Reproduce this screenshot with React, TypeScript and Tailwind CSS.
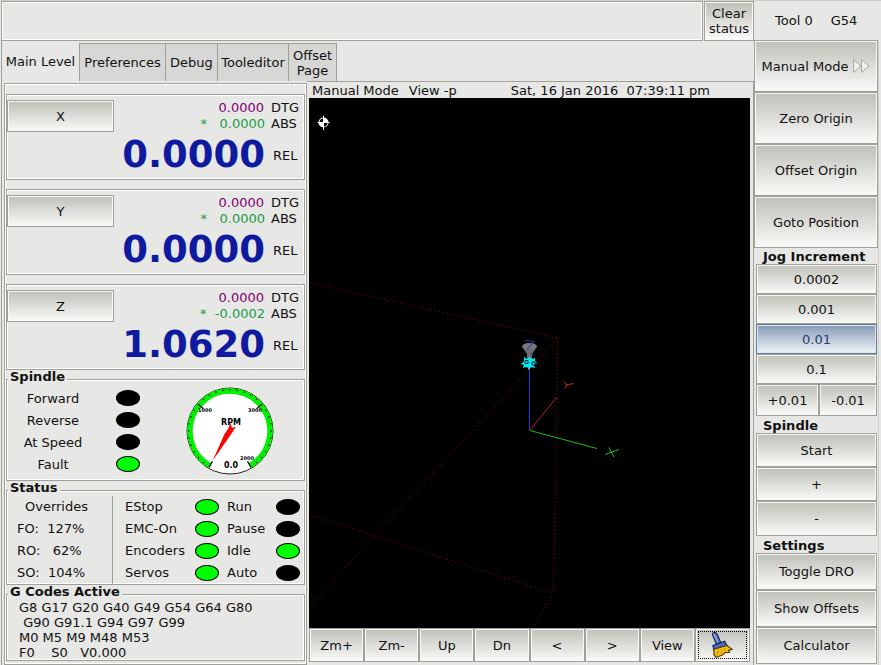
import React, { useState } from 'react';

const buttonBase =
  'flex items-center justify-center border border-[#a0a099] bg-linear-to-b from-[#bfc0b9] to-[#fafaf9] shadow-[inset_0_0_0_1px_#f8f8f6]';

type PanelButtonProps = {
  children: React.ReactNode;
  className?: string;
  label?: string;
};

const PanelButton = ({ children, className = '', label }: PanelButtonProps) => (
  <button type="button" aria-label={label} className={`${buttonBase} ${className}`}>
    {children}
  </button>
);

const Frame = ({ title, className = '', children }: { title?: string; className?: string; children: React.ReactNode }) => (
  <section className={`border border-[#a0a099] shadow-[inset_0_0_0_1px_#fff] ${className}`}>
    {title && <h2 className="-mt-2.5 mb-[3px] ml-px w-fit bg-[#e7e7e5] px-0.5 leading-[14px] font-bold">{title}</h2>}
    {children}
  </section>
);

const Led = ({ on = false }: { on?: boolean }) => (
  <span className={`block h-4 w-6 rounded-[50%] border border-black ${on ? 'bg-[#00ff00]' : 'bg-black'}`}></span>
);

const axes = [
  { name: 'X', dtg: '0.0000', abs: '*   0.0000', rel: '0.0000' },
  { name: 'Y', dtg: '0.0000', abs: '*   0.0000', rel: '0.0000' },
  { name: 'Z', dtg: '0.0000', abs: '*  -0.0002', rel: '1.0620' }
];

const spindleLeds = [
  { name: 'Forward', on: false },
  { name: 'Reverse', on: false },
  { name: 'At Speed', on: false },
  { name: 'Fault', on: true }
];

const statusLeds = [
  { name: 'EStop', on: true },
  { name: 'Run', on: false },
  { name: 'EMC-On', on: true },
  { name: 'Pause', on: false },
  { name: 'Encoders', on: true },
  { name: 'Idle', on: true },
  { name: 'Servos', on: true },
  { name: 'Auto', on: false }
];

const gcodeLines = ['G8 G17 G20 G40 G49 G54 G64 G80', ' G90 G91.1 G94 G97 G99', 'M0 M5 M9 M48 M53', 'F0    S0   V0.000'];

const tabs = [
  { name: 'Main Level', width: 'w-[78px]' },
  { name: 'Preferences', width: 'w-[87px]' },
  { name: 'Debug', width: 'w-[52px]' },
  { name: 'Tooleditor', width: 'w-[71px]' },
  { name: 'Offset Page', width: 'w-12' }
];

const AxisReadout = ({ axis }: { axis: (typeof axes)[number] }) => (
  <Frame className="pt-[5px] pb-px">
    <div className="flex">
      <PanelButton className="h-8 w-[107px]">{axis.name}</PanelButton>
      <div className="flex-1 text-right leading-4 whitespace-pre">
        <div className="pr-px text-[#800070]">{axis.dtg}</div>
        <div className="text-[#229a48]">{axis.abs}</div>
      </div>
      <div className="ml-1.5 w-[33px] leading-4">
        <div>DTG</div>
        <div>ABS</div>
      </div>
    </div>
    <div className="flex h-[46px] items-center justify-end">
      <span className="text-[37px] leading-10 font-bold text-[#0e1ba0]">{axis.rel}</span>
      <span className="ml-2 w-[31px]">REL</span>
    </div>
  </Frame>
);

const Gauge = () => {
  const ticks = Array.from({ length: 31 }, (_, i) => -150 + i * 10);
  return (
    <svg className="h-[88px] w-[88px]" viewBox="0 0 88 88" role="img" aria-label="Spindle RPM">
      <circle cx="44" cy="44" r="43" fill="#fff" stroke="#222" strokeWidth="1" />
      <path d="M24 78.6A40 40 0 1 1 64 78.6" fill="none" stroke="#00f000" strokeWidth="5.5" />
      {ticks.map((angle) => (
        <path
          key={angle}
          d={angle === -150 || angle === -50 || angle === 50 || angle === 150 ? 'M44 2V9' : 'M44 2V3.5'}
          stroke="#000"
          strokeWidth="1.2"
          transform={`rotate(${angle} 44 44)`}
        />
      ))}
      <g fill="#000" textAnchor="middle" className="font-bold">
        <text x="19" y="25" fontSize="5">1000</text>
        <text x="69" y="25" fontSize="5">3000</text>
        <text x="61" y="73" fontSize="5">2000</text>
        <text x="45" y="38" fontSize="8">RPM</text>
        <text x="45" y="81" fontSize="8">0.0</text>
      </g>
      <path d="M26.5 74L38.5 47L42 42L44.5 36L46 41L50 39.5L44.5 48Z" fill="#f00" />
    </svg>
  );
};

const Preview = () => (
  <svg className="min-h-0 w-full flex-1 bg-black" viewBox="0 0 441 530" role="img" aria-label="Tool path preview">
    {/* work envelope */}
    <g fill="none" stroke="#a80000" strokeWidth="1" strokeDasharray="1 3">
      <path d="M1 185L249 240" />
      <path d="M248.5 240L247.5 339L244.5 495" />
      <path d="M249 240L1 508" />
      <path d="M1 417L243 495" />
      <path d="M243 499L224 529" />
    </g>
    {/* axes */}
    <g fill="none" strokeWidth="1">
      <path d="M220.5 271V332" stroke="#3030e0" />
      <path d="M221 332L248 299" stroke="#b82020" />
      <path d="M221 332.5L288 350.5" stroke="#20b820" />
      <path d="M255 283.5L258 287L264.5 285.5M258 287L255.5 290.5" stroke="#d02828" />
      <path d="M296 356.5L310 351.5M300 349.5L305 359" stroke="#20c020" />
    </g>
    {/* tool */}
    <path d="M213 249C213 244 228 244 228 249L223 256V263H218V256Z" fill="#6d6d6d" />
    <ellipse cx="220.5" cy="248" rx="7" ry="3" fill="#777" />
    <path d="M216 242.5L224.5 243.5L218 252M221 256L225 256" fill="none" stroke="#3030d0" />
    <path
      d="M215 259L218 261L220 259L223 261L226 260L226 263L228 265L225 267L226 270L222 269L220 272L218 269L214 270L215 267L212 266L215 263Z"
      fill="#00eaf0"
    />
    <path d="M216 262.5H219V265.5H216ZM223 264H226V267H223Z" fill="none" stroke="#002c30" />
    <path d="M219.5 271.5H221" stroke="#f03030" />
    {/* centre of gravity mark */}
    <circle cx="14.5" cy="24.5" r="5" fill="#fff" />
    <path d="M14.5 17.5V32M8.5 24.5H20.5" stroke="#fff" />
    <path d="M14 24V20.5A4 4 0 0 0 10.5 24ZM15 25V28.5A4 4 0 0 0 18.5 25Z" fill="#000" />
  </svg>
);

const BrushIcon = () => (
  <svg className="h-7 w-7 shrink-0" viewBox="0 0 26 26" aria-hidden="true">
    <path d="M4 3C4 1 7 .5 8.500 3L12 11L8 13Z" fill="#5878c8" stroke="#14204c" />
    <path d="M5.500 3L9 10" stroke="#9cb4ec" strokeWidth="1.200" />
    <path d="M4.500 13.500L15.500 9.500L18 14L5.500 18Z" fill="#4a69b8" stroke="#14204c" />
    <path d="M5.500 17L17.500 13.500L22.500 17L19 18L20 20L16 20L13 22.500L7.500 24.500L5.500 22Z" fill="#f6bf14" stroke="#4c3406" />
    <path d="M8 22L10 18M12 21L13 17M15 19L16 16" stroke="#c98a00" />
  </svg>
);

const App = () => {
  const [activeTab, setActiveTab] = useState('Main Level');
  const [jog, setJog] = useState('0.01');

  return (
    <div className="flex min-h-screen border-t border-[#d2cfca] bg-[#e7e7e5] font-['DejaVu_Sans',sans-serif] text-[13px] leading-[15px] text-[#111]">
      <main className="flex min-w-0 flex-1 flex-col pl-px">
        <header className="flex h-10 gap-px">
          <textarea
            readOnly
            aria-label="Status messages"
            className="block h-10 min-w-0 flex-1 resize-none border border-[#a0a099] shadow-[inset_0_0_0_1px_#fff] outline-none"
          />
          <PanelButton className="w-[50px] text-center">Clear<br />status</PanelButton>
        </header>

        <div className="flex h-10 items-end" role="tablist">
          {tabs.map((tab) => (
            <button
              key={tab.name}
              type="button"
              role="tab"
              aria-selected={tab.name === activeTab}
              onClick={() => setActiveTab(tab.name)}
              className={`${tab.width} border-[#a0a099] ${
                tab.name === activeTab ? 'h-10 border-l' : 'h-[38px] border-t border-r bg-[#d7d7d5]'
              } ${tab.name === 'Preferences' ? 'border-l' : ''}`}
            >
              {tab.name}
            </button>
          ))}
        </div>

        <div className="flex flex-1 border-l border-[#a0a099]">
          <div className="flex w-[305px] shrink-0 flex-col pt-0.5 pb-px pl-0.5">
            <div className="flex flex-1 flex-col gap-[9px] border border-[#a0a099] px-px pt-2.5 pb-px shadow-[inset_0_0_0_1px_#fff]">
              {axes.map((axis) => (
                <AxisReadout key={axis.name} axis={axis} />
              ))}

              <Frame title="Spindle" className="h-[102px]">
                <div className="flex">
                  <ul className="flex-1">
                    {spindleLeds.map((led) => (
                      <li key={led.name} className="flex h-[22px] items-center">
                        <span className="w-[92px] text-center">{led.name}</span>
                        <span className="ml-[17px]"><Led on={led.on} /></span>
                      </li>
                    ))}
                  </ul>
                  <div className="mr-[30px]">
                    <Gauge />
                  </div>
                </div>
              </Frame>

              <Frame title="Status" className="h-[95px]">
                <div className="-mt-0.5 flex">
                  <div className="w-[106px] border-r border-[#a0a099] pl-2.5 leading-[22px]">
                    <div className="pr-4 text-center">Overrides</div>
                    <div className="whitespace-pre">FO:  127%</div>
                    <div className="whitespace-pre">RO:   62%</div>
                    <div className="whitespace-pre">SO:  104%</div>
                  </div>
                  <ul className="grid flex-1 grid-cols-[102px_1fr] pr-1 pl-3 leading-[22px]">
                    {statusLeds.map((led) => (
                      <li key={led.name} className="flex items-center justify-between pr-2 even:pr-0">
                        <span>{led.name}</span>
                        <Led on={led.on} />
                      </li>
                    ))}
                  </ul>
                </div>
              </Frame>

              <Frame title="G Codes Active" className="h-[67px]">
                <pre className="-mt-0.5 pl-3 font-['DejaVu_Sans',sans-serif] leading-[15px]">{gcodeLines.join('\n')}</pre>
              </Frame>
            </div>
          </div>

          <div className="flex min-w-0 flex-1 flex-col border-t border-r border-[#a0a099] pr-[3px] pb-1 pl-0.5">
            <div className="flex h-4 items-center px-[3px] whitespace-pre">
              <span>Manual Mode</span>
              <span className="ml-2.5">View -p</span>
              <span className="mr-[37px] ml-auto">Sat, 16 Jan 2016  07:39:11 pm</span>
            </div>
            <Preview />
            <div className="grid grid-cols-8">
              {['Zm+', 'Zm-', 'Up', 'Dn', '<', '>', 'View'].map((name) => (
                <PanelButton key={name} className="h-[34px]">{name}</PanelButton>
              ))}
              <PanelButton className="h-[34px] p-0.5" label="Clear plot">
                <span className="flex h-7 w-full items-center justify-center border border-dotted border-black">
                  <BrushIcon />
                </span>
              </PanelButton>
            </div>
          </div>
        </div>
      </main>

      <aside className="flex w-[127px] shrink-0 flex-col pr-0.5">
        <div className="flex h-[39px] items-center pl-[21px]">
          <span>Tool 0</span>
          <span className="ml-[18px]">G54</span>
        </div>
        <div className="flex flex-col border-r border-[#d2cfca]">
          <PanelButton className="h-[52px] gap-1">
            Manual Mode
            <svg className="h-4 w-[18px]" viewBox="0 0 18 16" fill="#f0f0ee" stroke="#a8a8a2" aria-hidden="true">
              <path d="M1.500 1.500L9 8L1.500 14.500ZM9.500 1.500L17 8L9.500 14.500Z" />
            </svg>
          </PanelButton>
          <PanelButton className="h-[52px]">Zero Origin</PanelButton>
          <PanelButton className="h-[52px]">Offset Origin</PanelButton>
          <PanelButton className="h-[52px]">Goto Position</PanelButton>
        </div>

        <div className="flex flex-1 flex-col border-r border-[#d2cfca] pr-px pl-0.5">
          <h2 className="h-4 pl-[7px] leading-[18px] font-bold">Jog Increment</h2>
          {['0.0002', '0.001', '0.01', '0.1'].map((step) => (
            <button
              key={step}
              type="button"
              aria-pressed={step === jog}
              onClick={() => setJog(step)}
              className={
                step === jog
                  ? 'h-[30px] border border-[#5f7d9f] bg-linear-to-b from-[#869bb5] to-[#f2f5f9] text-[#24426b] shadow-[inset_0_0_0_1px_#dfe7f0]'
                  : `h-[30px] ${buttonBase}`
              }
            >
              {step}
            </button>
          ))}
          <div className="grid grid-cols-[63px_1fr]">
            <PanelButton className="h-8">+{jog}</PanelButton>
            <PanelButton className="h-8">-{jog}</PanelButton>
          </div>

          <h2 className="h-[17px] pl-[7px] leading-5 font-bold">Spindle</h2>
          <PanelButton className="h-[34px]">Start</PanelButton>
          <PanelButton className="h-[34px]">+</PanelButton>
          <PanelButton className="h-[35px]">-</PanelButton>

          <h2 className="h-[17px] pl-[7px] leading-5 font-bold">Settings</h2>
          <PanelButton className="h-[37px]">Toggle DRO</PanelButton>
          <PanelButton className="h-[37px]">Show Offsets</PanelButton>
          <PanelButton className="h-[37px]">Calculator</PanelButton>
        </div>
      </aside>
    </div>
  );
};

export default App;
